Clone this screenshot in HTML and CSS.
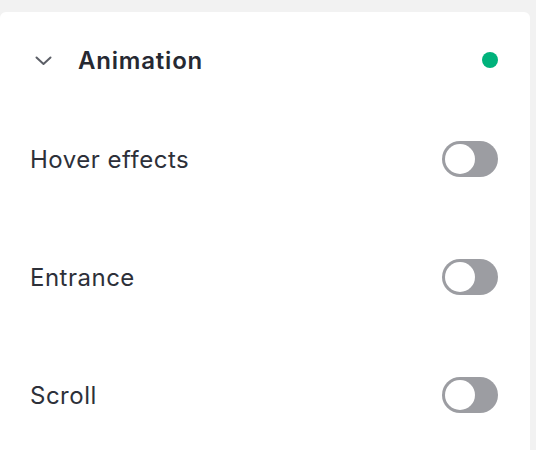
FILE: index.html
```html
<!DOCTYPE html>
<html lang="en">
<head>
<meta charset="utf-8">
<title>Animation</title>
<link rel="stylesheet" href="styles.css">
</head>
<body>
<section class="panel">
  <header class="panel-header">
    <svg class="chevron" width="17" height="10" viewBox="0 0 17 10" aria-hidden="true">
      <path d="M1.5 1.5 L8.5 8 L15.5 1.5" fill="none" stroke="#5c5f67" stroke-width="2" stroke-linecap="round" stroke-linejoin="round"/>
    </svg>
    <h2 class="panel-title">Animation</h2>
    <span class="status-dot"></span>
  </header>
  <div class="rows">
    <div class="row">
      <span class="row-label">Hover effects</span>
      <span class="toggle"><span class="knob"></span></span>
    </div>
    <div class="row">
      <span class="row-label">Entrance</span>
      <span class="toggle"><span class="knob"></span></span>
    </div>
    <div class="row">
      <span class="row-label">Scroll</span>
      <span class="toggle"><span class="knob"></span></span>
    </div>
  </div>
</section>
</body>
</html>
```
FILE: styles.css
```css
html, body {
  margin: 0;
  padding: 0;
  background: #f2f2f2;
  height: 100%;
  overflow: hidden;
}
body {
  font-family: Inter, "Noto Sans", sans-serif;
  color: #2b2e37;
  padding-top: 12px;
  box-sizing: border-box;
}
.panel {
  width: 530px;
  height: 460px;
  background: #ffffff;
  border-radius: 6px 6px 0 0;
}
.panel-header {
  height: 96px;
  display: flex;
  align-items: center;
  padding: 0 32px 0 35px;
}
.chevron {
  display: block;
  flex: none;
  margin-top: 2px;
}
.panel-title {
  margin: 0 0 0 26px;
  font-size: 24px;
  font-weight: 600;
  letter-spacing: 0.8px;
  flex: 1;
  color: #262932;
}
.status-dot {
  width: 16px;
  height: 16px;
  border-radius: 50%;
  background: #00b27b;
  flex: none;
}
.rows {
  display: flex;
  flex-direction: column;
  gap: 82px;
  padding: 33px 32px 0 30px;
}
.row {
  height: 36px;
  display: flex;
  align-items: center;
  justify-content: space-between;
}
.row-label {
  font-size: 24px;
  font-weight: 400;
  letter-spacing: 0.5px;
  color: #2d3039;
}
.toggle {
  width: 56px;
  height: 36px;
  box-sizing: border-box;
  border-radius: 18px;
  background: #9c9da2;
  padding: 3px;
  display: flex;
  align-items: center;
}
.knob {
  width: 30px;
  height: 30px;
  border-radius: 50%;
  background: #ffffff;
}
```
